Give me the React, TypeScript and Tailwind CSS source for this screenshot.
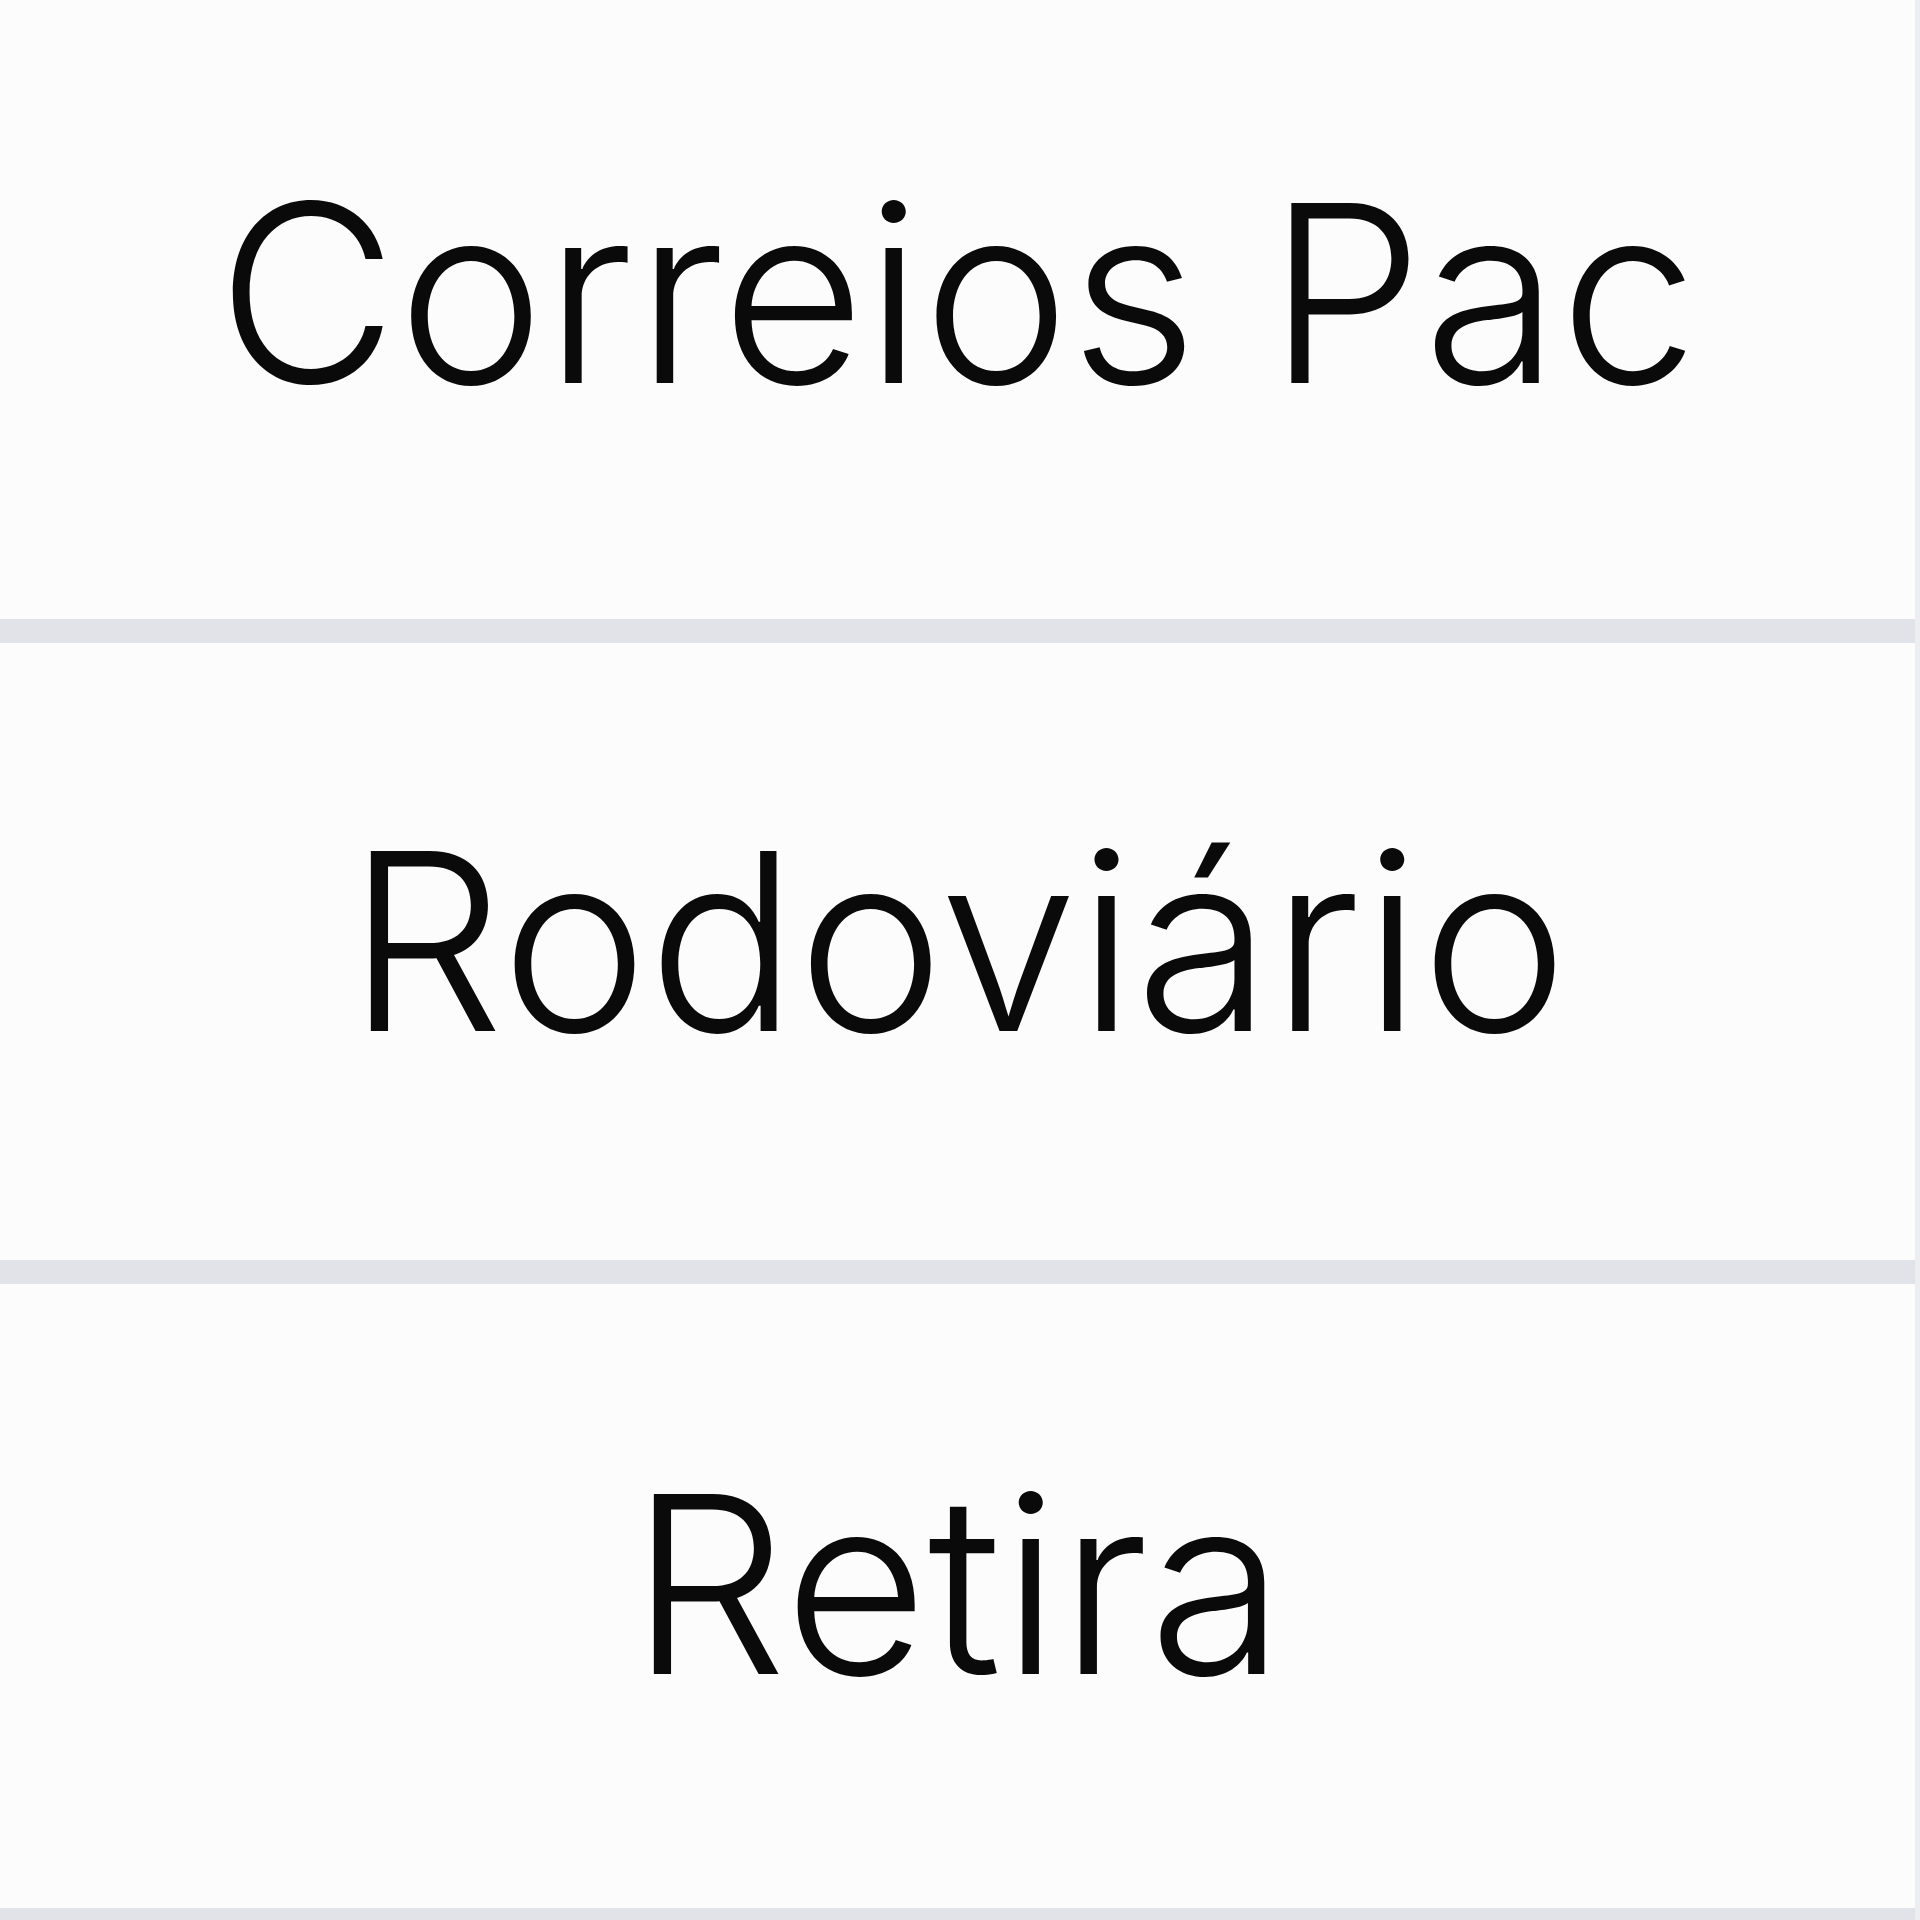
const options = [
  { label: 'Correios Pac', h: 'h-[643px]', pad: 'pb-[34px]' },
  { label: 'Rodoviário', h: 'h-[641px]', pad: 'pb-[22px]' },
  { label: 'Retira', h: 'h-[648px]', pad: 'pb-[24px]' },
];

export default function App() {
  return (
    <div className="w-[1920px] h-[1920px] bg-[#fcfcfd] border-r-[5px] border-r-[#eceef2] flex flex-col overflow-hidden">
      {options.map((o) => (
        <div
          key={o.label}
          className={`${o.h} shrink-0 flex items-center justify-center border-b-[24px] border-b-[#e1e3e8]`}
        >
          <span
            className={`${o.pad} text-[248px] font-[350] leading-none text-[#0a0a0a]`}
            style={{ fontFamily: 'Inter, "Liberation Sans", sans-serif' }}
          >
            {o.label}
          </span>
        </div>
      ))}
    </div>
  );
}
